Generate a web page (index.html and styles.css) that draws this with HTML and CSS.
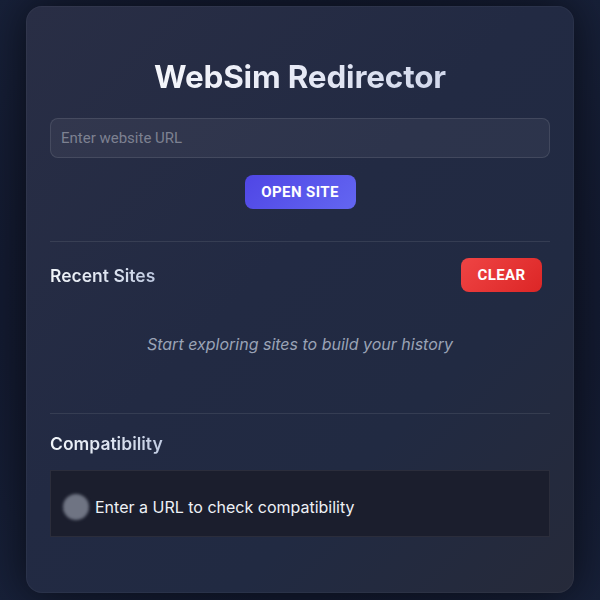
FILE: index.html
```html
<!DOCTYPE html>
<html lang="en">
<head>
<meta charset="utf-8">
<title>WebSim Redirector</title>
<link rel="stylesheet" href="styles.css">
</head>
<body>
<main class="card">
  <h1 class="title">WebSim Redirector</h1>
  <input class="url-input" type="text" placeholder="Enter website URL">
  <div class="actions">
    <button class="btn btn-primary" type="button">Open Site</button>
  </div>
  <hr class="divider">
  <section class="recent">
    <div class="section-head">
      <h2 class="section-title">Recent Sites</h2>
      <button class="btn btn-danger" type="button">Clear</button>
    </div>
    <p class="empty">Start exploring sites to build your history</p>
  </section>
  <hr class="divider">
  <section class="compat">
    <h2 class="section-title">Compatibility</h2>
    <div class="compat-box">
      <span class="status-dot"></span>
      <span class="compat-text">Enter a URL to check compatibility</span>
    </div>
  </section>
</main>
</body>
</html>
```
FILE: styles.css
```css
* { box-sizing: border-box; }
html, body { height: 100%; }
body {
  margin: 0;
  padding: 6px 26px 7px;
  background: radial-gradient(circle at 50% 50%, #10152a 0%, #131a30 70%, #172038 100%);
  font-family: Inter, "Noto Sans", sans-serif;
  color: #e2e8f0;
}
.card {
  height: 587px;
  border-radius: 16px;
  padding: 51px 24px 0;
  background: linear-gradient(135deg, #292e45 0%, #222a43 45%, #212a42 70%, #262a3a 100%);
  box-shadow: 0 0 40px rgba(0,0,0,0.55), inset 0 0 0 1px rgba(255,255,255,0.04);
  display: flex;
  flex-direction: column;
}
.title {
  margin: 0;
  text-align: center;
  font-size: 31.5px;
  line-height: 40px;
  font-weight: 700;
  letter-spacing: -0.2px;
  background: linear-gradient(90deg, #ffffff 0%, #e6e9f5 50%, #c2cbe4 100%);
  -webkit-background-clip: text;
  background-clip: text;
  color: transparent;
}
.url-input {
  margin-top: 21px;
  height: 40px;
  width: 100%;
  border-radius: 8px;
  border: 1px solid rgba(255,255,255,0.1);
  background: rgba(255,255,255,0.05);
  padding: 0 10px;
  font-family: Roboto, sans-serif;
  font-size: 15px;
  color: #e2e8f0;
  outline: none;
}
.url-input::placeholder { color: #7d8191; }
.actions {
  display: flex;
  justify-content: center;
  margin-top: 17px;
}
.btn {
  border: none;
  height: 34px;
  border-radius: 8px;
  font-family: Roboto, sans-serif;
  font-weight: 700;
  font-size: 15px;
  letter-spacing: 0.4px;
  text-transform: uppercase;
  color: #fff;
  cursor: pointer;
}
.btn-primary {
  width: 111px;
  background: linear-gradient(135deg, #4f46e5 0%, #6366f1 100%);
}
.btn-danger {
  width: 81px;
  background: linear-gradient(135deg, #ef4444 0%, #dc2626 100%);
}
.divider {
  margin: 32px 0 0;
  border: none;
  height: 1px;
  background: rgba(255,255,255,0.09);
}
.recent { padding-top: 16px; }
.section-head {
  display: flex;
  align-items: center;
  justify-content: space-between;
  padding-right: 8px;
}
.section-title {
  margin: 0;
  font-size: 17.5px;
  font-weight: 600;
  background: linear-gradient(90deg, #f1f5f9 0%, #dbe2ef 60%, #c0cbe2 100%);
  -webkit-background-clip: text;
  background-clip: text;
  color: transparent;
  display: inline-block;
}
.empty {
  margin: 42px 0 0;
  height: 79px;
  text-align: center;
  font-size: 16px;
  font-style: italic;
  color: #9aa3b6;
}
.recent + .divider { margin-top: 0; }
.compat { padding-top: 19px; }
.compat-box {
  margin-top: 16px;
  height: 67px;
  display: flex;
  align-items: center;
  gap: 6px;
  padding: 6px 12px 0;
  background: #1b1e2d;
  border: 1px solid rgba(255,255,255,0.07);
}
.status-dot {
  width: 26px;
  height: 26px;
  border-radius: 50%;
  background: #6f7483;
  filter: blur(1.5px);
  flex: none;
}
.compat-text {
  font-size: 16px;
  color: #eef1f6;
}
```
